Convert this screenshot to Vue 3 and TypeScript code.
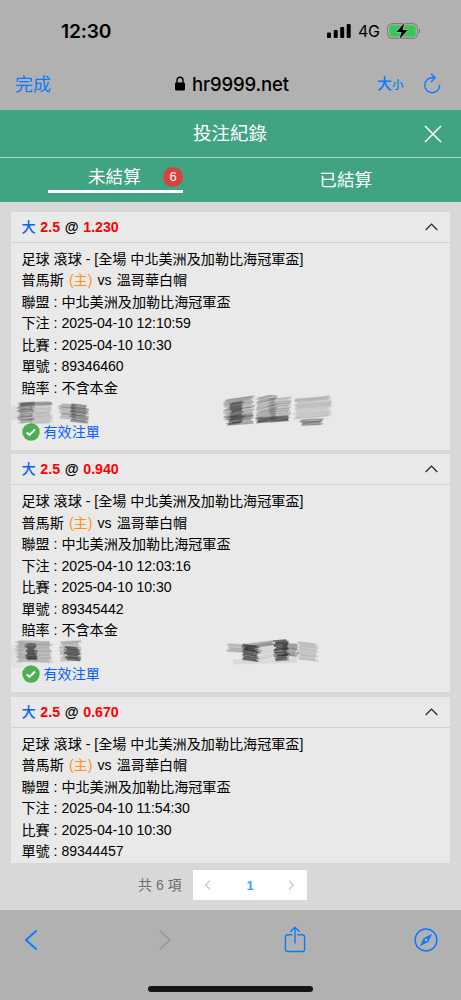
<script setup lang="ts">
interface Patch { x: number; y: number; w: number; h: number; tone: number; slope: number }
interface Bet { odds: string; placed: string; id: string; full: boolean; patches: Patch[] }
interface Stroke { d: string; o: number; w: number }

const bets: Bet[] = [
  {
    odds: '1.230', placed: '2025-04-10 12:10:59', id: '89346460', full: true,
    patches: [
      { x: 10, y: 7, w: 14, h: 14, tone: 0.04, slope: -1 },
      { x: 19, y: 4, w: 14, h: 20, tone: 0.26, slope: -1 },
      { x: 20, y: 4, w: 31, h: 3, tone: 0.2, slope: -1 },
      { x: 31, y: 6, w: 20, h: 19, tone: 0.12, slope: -1 },
      { x: 60, y: 5, w: 15, h: 15, tone: 0.17, slope: 1 },
      { x: 71, y: 5, w: 16, h: 18, tone: 0.32, slope: 2 },
      { x: 225, y: 1, w: 28, h: 20, tone: 0.2, slope: -4 },
      { x: 230, y: 4, w: 13, h: 22, tone: 0.38, slope: -2 },
      { x: 228, y: 18, w: 24, h: 9, tone: 0.25, slope: -2 },
      { x: 257, y: -1, w: 19, h: 26, tone: 0.17, slope: -5 },
      { x: 270, y: 0, w: 20, h: 23, tone: 0.17, slope: -2 },
      { x: 258, y: 19, w: 30, h: 5, tone: 0.38, slope: -2 },
      { x: 295, y: 0, w: 35, h: 20, tone: 0.12, slope: -3 },
      { x: 301, y: 21, w: 21, h: 6, tone: 0.35, slope: -1 },
    ],
  },
  {
    odds: '0.940', placed: '2025-04-10 12:03:16', id: '89345442', full: true,
    patches: [
      { x: 9, y: 4, w: 14, h: 23, tone: 0.03, slope: -1 },
      { x: 17, y: 0, w: 34, h: 21, tone: 0.18, slope: 1 },
      { x: 26, y: 3, w: 10, h: 16, tone: 0.48, slope: 0 },
      { x: 61, y: 1, w: 19, h: 19, tone: 0.17, slope: -1 },
      { x: 66, y: 6, w: 13, h: 13, tone: 0.46, slope: 1 },
      { x: 228, y: 3, w: 32, h: 8, tone: 0.18, slope: 2 },
      { x: 243, y: 3, w: 14, h: 16, tone: 0.46, slope: 2 },
      { x: 245, y: 4, w: 28, h: 4, tone: 0.3, slope: -4 },
      { x: 257, y: 7, w: 18, h: 12, tone: 0.06, slope: -3 },
      { x: 275, y: 0, w: 13, h: 20, tone: 0.52, slope: -1 },
      { x: 282, y: 2, w: 15, h: 13, tone: 0.26, slope: 1 },
      { x: 299, y: 1, w: 18, h: 18, tone: 0.11, slope: 2 },
      { x: 233, y: 19, w: 64, h: 4, tone: 0.05, slope: -2 },
    ],
  },
  { odds: '0.670', placed: '2025-04-10 11:54:30', id: '89344457', full: false, patches: [] },
]

function noise(n: number): number {
  const v = Math.sin(n * 91.73) * 43758.5453
  return v - Math.floor(v)
}

function strokes(patches: Patch[]): Stroke[] {
  const out: Stroke[] = []
  patches.forEach((p, k) => {
    for (let i = 0; i < p.h; i += 0.9) {
      const s = k * 57 + i * 3.1 + p.x
      const a = p.x + noise(s) * 4 - 2
      const b = p.x + p.w + noise(s + 1) * 4 - 2
      const y = p.y + i
      const bend = noise(s + 2) - 0.5
      out.push({
        d: `M${a.toFixed(1)} ${y.toFixed(1)}Q${((a + b) / 2).toFixed(1)} ${(y + p.slope / 2 + bend).toFixed(1)} ${b.toFixed(1)} ${(y + p.slope).toFixed(1)}`,
        o: p.tone * (0.7 + noise(s + 3) * 0.6),
        w: 1.2 + noise(s + 4) * 0.5,
      })
    }
  })
  return out
}
</script>

<template>
  <div class="phone">
    <div class="status">
      <span class="time">12:30</span>
      <span class="signals">
        <svg class="bars" width="25" height="16" viewBox="0 0 25 16">
          <rect x="0" y="9.5" width="4" height="5.5" rx="1" /><rect x="6.7" y="7" width="4" height="8" rx="1" /><rect x="13.2" y="4" width="4" height="11" rx="1" /><rect x="19.7" y="1" width="4" height="14" rx="1" />
        </svg>
        <span class="net">4G</span>
        <svg class="battery" width="34" height="18" viewBox="0 0 34 18">
          <rect x=".6" y="1.6" width="29.8" height="14.8" rx="4.7" fill="none" stroke="#808080" stroke-width="1.1" />
          <path d="M31.7 6.8c2.1.6 2.1 3.9 0 4.5z" fill="#808080" />
          <rect x="2.3" y="3.3" width="26.4" height="11.4" rx="3" fill="#35c759" />
          <path d="M17 1.2 9.5 10h5l-1.8 7 8-9h-5z" fill="#000" stroke="#b1b1b1" stroke-width="1.4" paint-order="stroke" stroke-linejoin="round" />
        </svg>
      </span>
    </div>
    <div class="browser">
      <span class="done">完成</span>
      <span class="host">
        <svg width="12" height="16" viewBox="0 0 12 16"><rect x="1" y="6.6" width="10" height="8" rx="1.4" /><path d="M3 7.3V4.2a3 3 0 0 1 6 0v3.1" fill="none" stroke="#000" stroke-width="1.4" /></svg>
        <span>hr9999.net</span>
      </span>
      <span class="size"><b>大</b><i>小</i></span>
      <svg class="reload" width="18" height="22" viewBox="0 0 18 22"><path d="M16.7 12.2a7.5 7.5 0 1 1-7.5-7.5H12M8.4 1.1l3.8 3.7-3.8 3.7" fill="none" stroke="#087cff" stroke-width="1.4" stroke-linecap="round" stroke-linejoin="round" /></svg>
    </div>

    <header class="title">
      <span>投注紀錄</span>
      <svg width="18" height="18" viewBox="0 0 18 18"><path d="m1 1 16 16M17 1 1 17" stroke="#fff" stroke-width="1.6" /></svg>
    </header>
    <nav class="tabs">
      <div class="tab active"><div class="mark"><span>未結算</span><em>6</em></div></div>
      <div class="tab"><span>已結算</span></div>
    </nav>

    <main>
      <section class="list">
        <article v-for="bet in bets" :key="bet.id" class="card">
          <div class="head">
            <span class="pick"><span class="side">大</span> <b>2.5</b> <strong>@</strong> <b>{{ bet.odds }}</b></span>
            <svg width="14" height="8" viewBox="0 0 14 8"><path d="m1.7 7 5.8-5.8L13.3 7" fill="none" stroke="#222" stroke-width="1.2" /></svg>
          </div>
          <div class="body">
            <p>足球 滾球 - [全場 中北美洲及加勒比海冠軍盃]</p>
            <p class="teams">普馬斯 <span class="home">(主)</span> vs 溫哥華白帽</p>
            <p>聯盟 : 中北美洲及加勒比海冠軍盃</p>
            <p>下注 : <span class="num">{{ bet.placed }}</span></p>
            <p>比賽 : <span class="num">2025-04-10 10:30</span></p>
            <p>單號 : <span class="num">{{ bet.id }}</span></p>
            <template v-if="bet.full">
              <p>賠率 : 不含本金</p>
              <div class="scribble">
                <svg width="350" height="36" viewBox="0 -4 350 36">
                  <path v-for="(s, i) in strokes(bet.patches)" :key="i" :d="s.d" :stroke-width="s.w" :stroke-opacity="s.o" fill="none" stroke="#222" />
                </svg>
              </div>
              <div class="valid">
                <svg width="18" height="18" viewBox="0 0 18 18"><circle cx="9" cy="9" r="8.7" fill="#4caf50" /><path d="m4.8 9.4 2.7 2.5 5.5-5.4" fill="none" stroke="#fff" stroke-width="2.1" /></svg>
                <span>有效注單</span>
              </div>
            </template>
          </div>
        </article>
      </section>
      <footer class="pager">
        <span class="total">共 6 項</span>
        <div class="pages">
          <svg width="8" height="12" viewBox="0 0 8 12"><path d="M6 1.7 1.7 6 6 10.3" /></svg>
          <b>1</b>
          <svg width="8" height="12" viewBox="0 0 8 12"><path d="M1 1.7 5.3 6 1 10.3" /></svg>
        </div>
      </footer>
    </main>

    <div class="toolbar">
      <svg class="back" width="14" height="22" viewBox="0 0 14 22"><path d="M12 2 2 11l10 9" fill="none" stroke="#087cff" stroke-width="1.9" stroke-linecap="round" stroke-linejoin="round" /></svg>
      <svg class="forward" width="14" height="22" viewBox="0 0 14 22"><path d="m2 2 10 9-10 9" fill="none" stroke="#969696" stroke-width="1.5" stroke-linecap="round" stroke-linejoin="round" /></svg>
      <svg class="share" width="22" height="27" viewBox="0 0 22 27"><path d="M8 8.7H3.7A2.3 2.3 0 0 0 1.4 11v12.2a2.3 2.3 0 0 0 2.3 2.3h14.6a2.3 2.3 0 0 0 2.3-2.3V11a2.3 2.3 0 0 0-2.3-2.3H14M11 17V1.5M6.7 5.6 11 1.3l4.3 4.3" fill="none" stroke="#087cff" stroke-width="1.4" stroke-linecap="round" stroke-linejoin="round" /></svg>
      <svg class="compass" width="24" height="24" viewBox="0 0 24 24"><circle cx="12" cy="12" r="10.9" fill="none" stroke="#087cff" stroke-width="1.5" /><path d="m18.2 5.8-4 8.1-8.4 4.3 4-8.1z" fill="#087cff" /><circle cx="12" cy="12" r="1.4" fill="#b1b1b1" /></svg>
      <div class="indicator"></div>
    </div>
  </div>
</template>

<style>
body { background: #b1b1b1; }
</style>

<style scoped>
.phone { box-sizing: border-box; width: 461px; height: 1000px; overflow: hidden; display: flex; flex-direction: column; background: #b1b1b1; color: #000; font-family: "Liberation Sans", "Noto Sans CJK TC", sans-serif; }
.phone svg { flex: none; display: block; }
.status { height: 60px; flex: none; box-sizing: border-box; padding: 2px 41px 0 61px; display: flex; align-items: center; justify-content: space-between; }
.time { font: 600 19.2px/24px Inter, sans-serif; letter-spacing: -.15px; }
.signals { display: flex; align-items: center; }
.bars { margin-right: 6px; }
.net { width: 29px; font: 400 16px/20px Inter, sans-serif; letter-spacing: -.4px; }
.battery { margin-right: -1px; }
.browser { height: 50px; flex: none; box-sizing: border-box; padding: 0 20px 2px 15px; display: grid; grid-template-columns: 120px 1fr 76px 18px; align-items: center; }
.done { color: #087cff; font-size: 18px; line-height: 24px; padding-top: 1px; }
.host { display: flex; align-items: center; gap: 6px; padding-left: 39px; font: 500 18.5px/24px Inter, sans-serif; letter-spacing: -.15px; }
.size { color: #087cff; display: flex; align-items: baseline; padding-left: 30px; line-height: 20px; }
.size b { font-size: 15px; font-weight: 500; }
.size i { font-size: 11.5px; font-weight: 500; font-style: normal; }
.title { height: 47px; flex: none; box-sizing: border-box; padding: 0 19px 0 193px; display: flex; align-items: center; justify-content: space-between; color: #fff; background: #40a381; font-size: 18.5px; line-height: 26px; }
.tabs { height: 45px; flex: none; box-sizing: border-box; border-top: 1px solid #b9cec6; display: grid; grid-template-columns: 1fr 1fr; background: #40a381; color: #fff; font-size: 17.6px; line-height: 26px; }
.tab { text-align: center; padding-top: 9px; }
.tab.active { padding: 6px 0 0 48px; }
.mark { box-sizing: border-box; width: 135px; height: 29px; padding-left: 40px; border-bottom: 3px solid #fff; display: flex; align-items: flex-start; justify-content: space-between; }
.mark em { width: 20px; height: 20px; margin-top: 3px; border-radius: 50%; background: #d9413d; font-size: 13px; line-height: 20px; font-style: normal; text-align: center; }
main { height: 708px; flex: none; box-sizing: border-box; padding: 10px 11px 0; background: #d8d8d8; }
.list { height: 651px; overflow: hidden; }
.card { height: 237.6px; margin-bottom: 4.8px; background: #e9e9e9; }
.head { height: 31px; box-sizing: border-box; border-bottom: 1px solid #d2d2d2; padding: 0 12px 0 10.5px; display: flex; align-items: center; justify-content: space-between; }
.pick { color: #0a60ff; font-size: 14.2px; line-height: 20px; white-space: pre; word-spacing: .7px; }
.pick .side { font-weight: 500; }
.pick b { color: #f00; }
.pick strong { color: #000; }
.body { padding: 6px 10.5px 0; font-size: 14.1px; }
.body p { height: 21.45px; margin: 0; line-height: 21.45px; white-space: nowrap; }
.body .teams { word-spacing: 1.2px; }
.num { letter-spacing: -.08px; }
.home { color: #ff9216; }
.scribble { height: 27px; margin-left: -21.5px; }
.scribble svg { margin-top: -6px; padding-top: 2px; filter: blur(.5px); }
.scribble { display: flow-root; }
.valid { display: flex; align-items: center; gap: 4px; height: 22px; margin-top: -5px; color: #0a60ff; line-height: 22px; }
.pager { display: flex; align-items: center; height: 30px; margin-top: 7px; padding-left: 127px; color: #6b6d70; font-size: 14px; }
.total { width: 55px; padding-bottom: 2px; white-space: nowrap; }
.pages { box-sizing: border-box; width: 114px; height: 30px; padding: 0 11px; display: flex; align-items: center; justify-content: space-between; background: #fff; }
.pages b { color: #409eff; font-size: 13px; }
.pages path { fill: none; stroke: #bfc3cb; stroke-width: 1.2; }
.toolbar { flex: 1; display: grid; grid-template-columns: 134px 119px 131px 1fr; grid-template-rows: 59px 1fr; align-items: center; padding-left: 24px; }
.share { margin-left: 7px; }
.compass { margin-left: 6px; }
.indicator { grid-column: 1 / -1; justify-self: start; align-self: start; width: 165px; height: 6px; margin: 17px 0 0 124px; border-radius: 3px; background: #151515; }
</style>
